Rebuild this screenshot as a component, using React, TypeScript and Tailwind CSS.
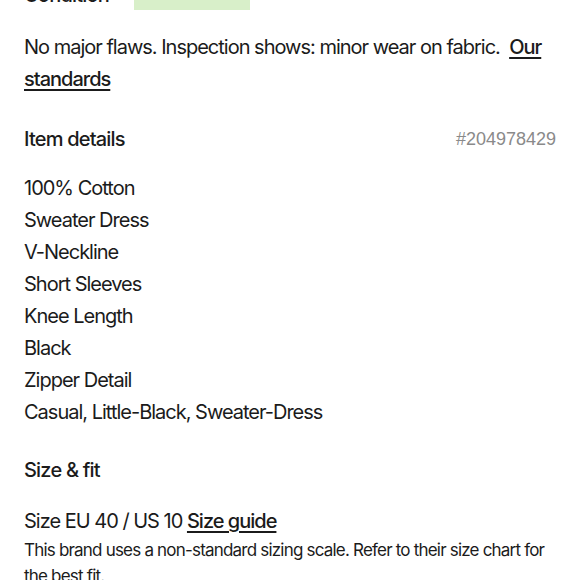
import type { ReactNode } from 'react'

const details = [
  '100% Cotton',
  'Sweater Dress',
  'V-Neckline',
  'Short Sleeves',
  'Knee Length',
  'Black',
  'Zipper Detail',
  'Casual, Little-Black, Sweater-Dress',
]

function Heading({ children }: { children: ReactNode }) {
  return <h2 className="text-[20px] font-medium leading-[32px] tracking-[-0.8px] text-[#1b1b1b]">{children}</h2>
}

export default function App() {
  return (
    <div className="min-h-[580px] overflow-hidden bg-white font-['Inter',sans-serif] text-[#1b1b1b]">
      <div className="-mt-[21px] px-6">
        {/* Condition */}
        <div className="flex items-center gap-[25px]">
          <Heading>Condition</Heading>
          <span className="h-[30px] w-[116px] bg-[#d8efc9]" />
        </div>

        <p className="mt-[20px] text-[20px] leading-[32px] tracking-[-1px]">
          No major flaws. Inspection shows: minor wear on fabric.&nbsp;{' '}
          <a href="#" className="font-medium underline underline-offset-[3px]">Our standards</a>
        </p>

        {/* Item details */}
        <div className="mt-[28px] flex items-center justify-between">
          <Heading>Item details</Heading>
          <span className="font-['Liberation_Sans',sans-serif] text-[18px] text-[#8a8a8a]">#204978429</span>
        </div>

        <ul className="mt-[17px]">
          {details.map((d) => (
            <li key={d} className="text-[20px] leading-[32px] tracking-[-1px]">{d}</li>
          ))}
        </ul>

        {/* Size & fit */}
        <div className="mt-[26px]">
          <Heading>Size &amp; fit</Heading>
        </div>
        <p className="mt-[19px] text-[20px] leading-[32px] tracking-[-1px]">
          Size EU 40 / US 10{' '}
          <a href="#" className="font-medium underline underline-offset-[3px]">Size guide</a>
        </p>
        <p className="text-[17px] leading-[26px] tracking-[-0.8px]">
          This brand uses a non-standard sizing scale. Refer to their size chart for the best fit.
        </p>
      </div>
    </div>
  )
}
